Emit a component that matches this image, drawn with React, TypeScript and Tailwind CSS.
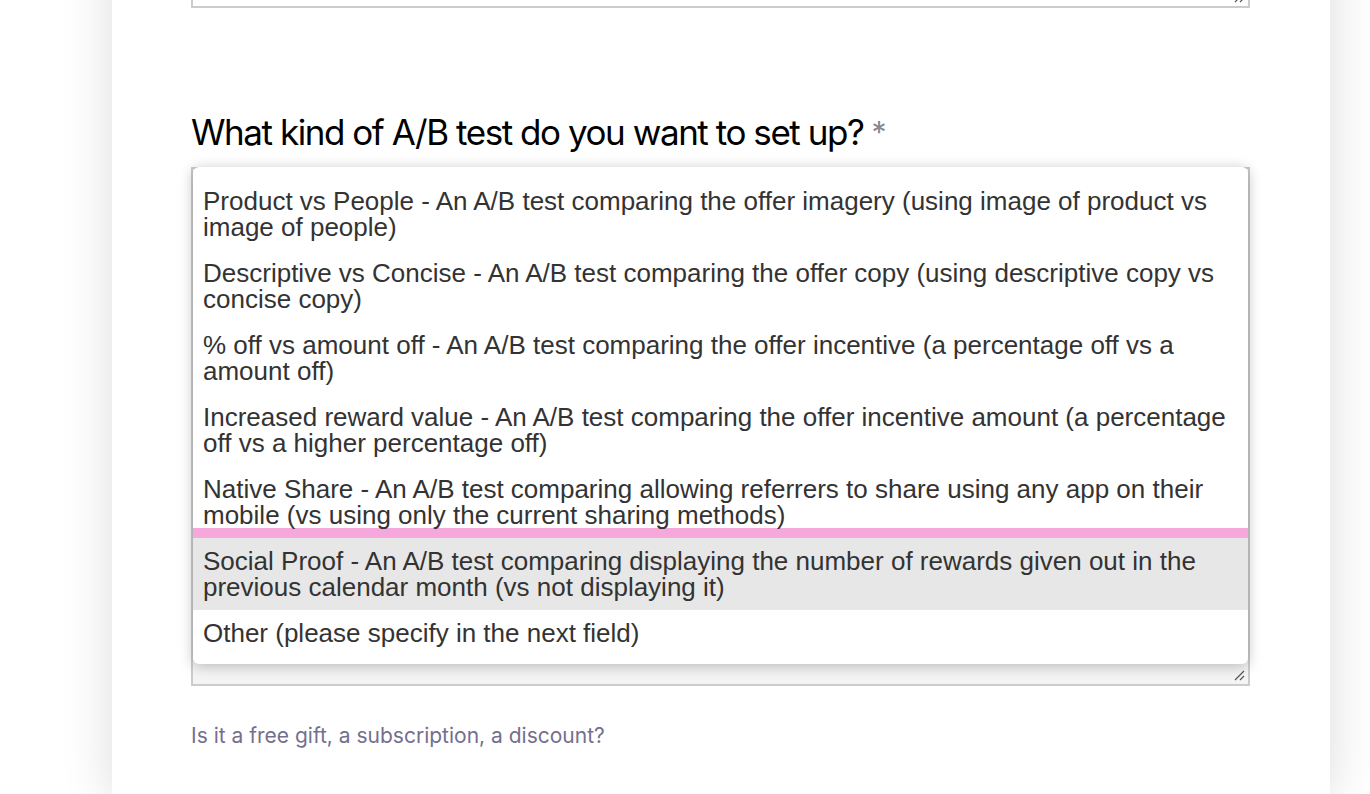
import { useState } from 'react';

const OPTIONS = [
  'Product vs People - An A/B test comparing the offer imagery (using image of product vs image of people)',
  'Descriptive vs Concise - An A/B test comparing the offer copy (using descriptive copy vs concise copy)',
  '% off vs amount off - An A/B test comparing the offer incentive (a percentage off vs a amount off)',
  'Increased reward value - An A/B test comparing the offer incentive amount (a percentage off vs a higher percentage off)',
  'Native Share - An A/B test comparing allowing referrers to share using any app on their mobile (vs using only the current sharing methods)',
  'Social Proof - An A/B test comparing displaying the number of rewards given out in the previous calendar month (vs not displaying it)',
  'Other (please specify in the next field)',
];

function Grip() {
  return (
    <svg className="absolute right-[3px] bottom-[3px]" width="12" height="12" viewBox="0 0 12 12">
      <path d="M2 11 L11 2 M7 11 L11 7" stroke="#555" strokeWidth="1.2" fill="none" />
    </svg>
  );
}

export default function App() {
  const [hovered, setHovered] = useState(5);

  return (
    <div className="h-[794px] overflow-hidden bg-white" style={{ fontFamily: '"Liberation Sans", Arial, sans-serif' }}>
      <div className="ml-[112px] w-[1218px] h-[900px] bg-white shadow-[0_0_48px_rgba(0,0,0,0.14)] pl-[79px] pr-[80px]">
        {/* previous field (cut off at top) */}
        <div className="relative -mt-[100px] h-[108px] border-2 border-[#cccccc] bg-white">
          <Grip />
        </div>

        <h2
          className="mt-[104px] text-[35px] leading-[40px] text-black tracking-[-1.45px]"
          style={{ fontFamily: 'Inter, "Liberation Sans", sans-serif' }}
        >
          What kind of A/B test do you want to set up?
          <span className="ml-[8px] text-[#888888] text-[30px] align-top tracking-normal">*</span>
        </h2>

        <div className="relative mt-[15px] h-[519px] border-2 border-[#cccccc] bg-[#f4f4f4]">
          <Grip />
          <div className="absolute -top-[2px] left-0 right-0 h-[497px] rounded-[6px] bg-white pt-[11px] shadow-[0_2px_14px_rgba(0,0,0,0.25)]">
            {OPTIONS.map((opt, i) => (
              <div
                key={i}
                onMouseEnter={() => setHovered(i)}
                className={`px-[10px] py-[10px] text-[26px] leading-[26px] text-[#333333] ${
                  i === hovered ? 'bg-[#e7e7e7]' : ''
                } ${i === 4 ? 'border-b-[10px] border-[#f6a8dc] pb-0' : ''}`}
              >
                {opt}
              </div>
            ))}
          </div>
        </div>

        <p
          className="mt-[36px] text-[21px] leading-[28px] text-[#746f8e] tracking-[0px]"
          style={{ fontFamily: 'Inter, "Liberation Sans", sans-serif' }}
        >
          Is it a free gift, a subscription, a discount?
        </p>
      </div>
    </div>
  );
}
